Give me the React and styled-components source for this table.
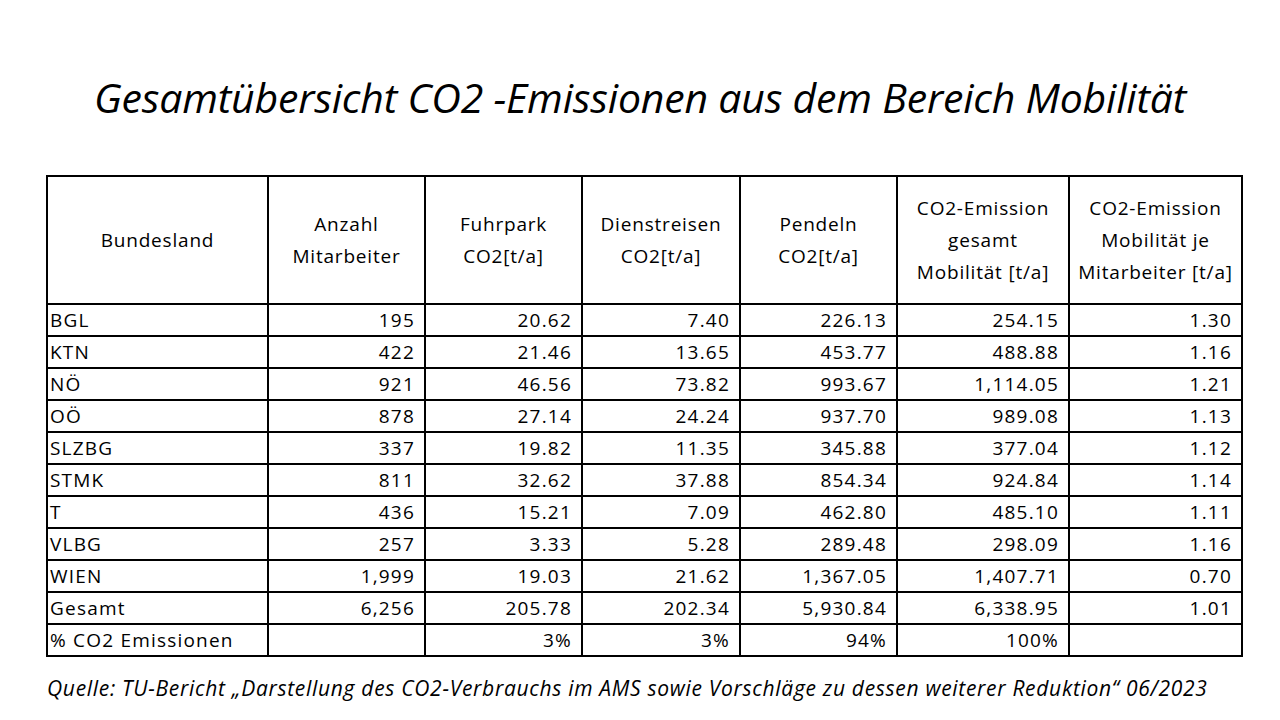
import styled, { createGlobalStyle } from "styled-components";

const GlobalStyle = createGlobalStyle`
  html, body {
    margin: 0;
    padding: 0;
    background: #fff;
  }
  #root {
    width: 1280px;
    height: 720px;
    overflow: hidden;
  }
`;

const Slide = styled.div`
  width: 1280px;
  height: 720px;
  display: flex;
  flex-direction: column;
  align-items: flex-start;
  background: #fff;
  color: #000;
`;

const Title = styled.h1`
  margin: 0;
  padding-top: 70px;
  width: 100%;
  text-align: center;
  font-family: "Open Sans", "Noto Sans", sans-serif;
  font-style: italic;
  font-weight: 400;
  font-size: 41px;
  line-height: 54px;
  letter-spacing: -0.2px;
  height: 105px;
`;

const Table = styled.table`
  margin-left: 46px;
  width: 1195px;
  border-collapse: collapse;
  table-layout: fixed;
  border: 2px solid #000;
  font-family: "Open Sans", "Noto Sans", sans-serif;
  font-size: 19px;
  color: #000;
`;

const HeadCell = styled.th`
  font-weight: 400;
  font-size: 19px;
  letter-spacing: 0.8px;
  height: 126px;
  border: 2px solid #000;
  text-align: center;
  vertical-align: middle;
  line-height: 32px;
  padding: 0;
  white-space: nowrap;
`;

const Cell = styled.td`
  height: 30px;
  border: 2px solid #000;
  padding: ${(p) => (p.$left ? "0 0 0 2px" : "0 9px 0 0")};
  text-align: ${(p) => (p.$left ? "left" : "right")};
  vertical-align: middle;
  line-height: 30px;
  letter-spacing: 1.2px;
  white-space: nowrap;
`;

const Source = styled.p`
  margin: 17px 0 0 47px;
  font-family: "Open Sans", "Noto Sans", sans-serif;
  font-style: italic;
  font-size: 21px;
  line-height: 28px;
  letter-spacing: 0.7px;
  white-space: nowrap;
`;

const widths = [221, 157, 157, 158, 157, 172, 173];

const headers = [
  ["Bundesland"],
  ["Anzahl", "Mitarbeiter"],
  ["Fuhrpark", "CO2[t/a]"],
  ["Dienstreisen", "CO2[t/a]"],
  ["Pendeln", "CO2[t/a]"],
  ["CO2-Emission", "gesamt", "Mobilität [t/a]"],
  ["CO2-Emission", "Mobilität je", "Mitarbeiter [t/a]"],
];

const rows = [
  ["BGL", "195", "20.62", "7.40", "226.13", "254.15", "1.30"],
  ["KTN", "422", "21.46", "13.65", "453.77", "488.88", "1.16"],
  ["NÖ", "921", "46.56", "73.82", "993.67", "1,114.05", "1.21"],
  ["OÖ", "878", "27.14", "24.24", "937.70", "989.08", "1.13"],
  ["SLZBG", "337", "19.82", "11.35", "345.88", "377.04", "1.12"],
  ["STMK", "811", "32.62", "37.88", "854.34", "924.84", "1.14"],
  ["T", "436", "15.21", "7.09", "462.80", "485.10", "1.11"],
  ["VLBG", "257", "3.33", "5.28", "289.48", "298.09", "1.16"],
  ["WIEN", "1,999", "19.03", "21.62", "1,367.05", "1,407.71", "0.70"],
  ["Gesamt", "6,256", "205.78", "202.34", "5,930.84", "6,338.95", "1.01"],
  ["% CO2 Emissionen", "", "3%", "3%", "94%", "100%", ""],
];

export default function App() {
  return (
    <Slide>
      <GlobalStyle />
      <Title>Gesamtübersicht CO2 -Emissionen aus dem Bereich Mobilität</Title>
      <Table>
        <colgroup>
          {widths.map((w, i) => (
            <col key={i} style={{ width: w }} />
          ))}
        </colgroup>
        <thead>
          <tr>
            {headers.map((lines, i) => (
              <HeadCell key={i}>
                {lines.map((l, j) => (
                  <div key={j}>{l}</div>
                ))}
              </HeadCell>
            ))}
          </tr>
        </thead>
        <tbody>
          {rows.map((row, r) => (
            <tr key={r}>
              {row.map((v, c) => (
                <Cell key={c} $left={c === 0}>
                  {v}
                </Cell>
              ))}
            </tr>
          ))}
        </tbody>
      </Table>
      <Source>
        Quelle: TU-Bericht „Darstellung des CO2-Verbrauchs im AMS sowie Vorschläge zu dessen weiterer Reduktion“ 06/2023
      </Source>
    </Slide>
  );
}
